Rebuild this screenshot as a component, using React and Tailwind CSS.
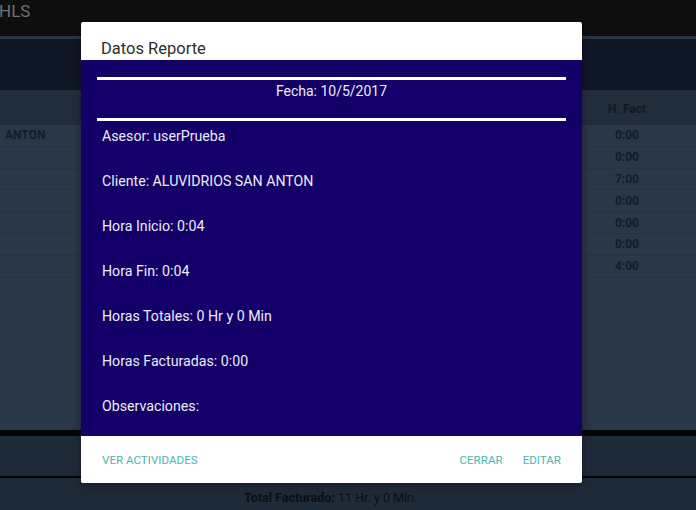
import React from "react";

const rows = ["0:00", "0:00", "7:00", "0:00", "0:00", "0:00", "4:00"];
const items = [
  "Asesor: userPrueba",
  "Cliente: ALUVIDRIOS SAN ANTON",
  "Hora Inicio: 0:04",
  "Hora Fin: 0:04",
  "Horas Totales: 0 Hr y 0 Min",
  "Horas Facturadas: 0:00",
  "Observaciones:",
];

export default function App() {
  return (
    <div
      className="relative w-[696px] h-[510px] overflow-hidden flex flex-col"
      style={{ fontFamily: "Roboto, 'Noto Sans', sans-serif" }}
    >
      {/* background app */}
      <div className="h-[36px] shrink-0 bg-[#0e0e0e] flex items-start pt-[0px]">
        <span className="text-[17px] leading-[22px] text-[#6f7378] ml-[-1px]">HLS</span>
      </div>
      <div className="h-[3px] shrink-0 bg-[#2b3644]" />
      <div className="h-[51px] shrink-0 bg-[#0f1625]" />
      <div className="h-[35px] shrink-0 bg-[#222d3c] flex items-center justify-end pr-[24px]">
        <span className="w-[90px] text-center text-[12px] font-bold text-[#101824] pt-[2px]">H. Fact</span>
      </div>
      <div className="flex-1 bg-[#2a3748] flex flex-col">
        {rows.map((v, i) => (
          <div key={i} className="h-[21.8px] shrink-0 flex items-center justify-between pr-[24px] border-b border-[#263243]">
            <span className="pl-[5px] text-[12px] font-bold text-[#141c28]">{i === 0 ? "ANTON" : ""}</span>
            <span className="w-[90px] text-center text-[12px] font-bold text-[#141c28]">{v}</span>
          </div>
        ))}
      </div>
      <div className="h-[6px] shrink-0 bg-[#050505]" />
      <div className="h-[40px] shrink-0 bg-[#1f2a39]" />
      <div className="h-[2px] shrink-0 bg-[#050505]" />
      <div className="h-[32px] shrink-0 bg-[#1f2a39] flex pl-[244px] pt-[13px]">
        <span className="text-[12.5px] leading-[14px] text-[#0a0e15]">
          <b>Total Facturado:</b> 11 Hr. y 0 Min.
        </span>
      </div>

      {/* dialog */}
      <div className="absolute left-[81px] top-[22px] w-[501px] flex flex-col bg-white rounded-[2px] shadow-[0_2px_8px_rgba(0,0,0,0.4)]">
        <div className="h-[38px] shrink-0 overflow-hidden pl-[20px] pt-[15px]">
          <span className="text-[16.5px] leading-[24px] text-[#2e2e2e] block">Datos Reporte</span>
        </div>
        <div className="h-[376px] shrink-0 bg-[#130068] px-[16px] pt-[17px] flex flex-col">
          <div className="h-[3px] shrink-0 bg-white" />
          <div className="h-[20px] shrink-0 mt-[1px] text-center text-[14px] leading-[20px] text-[#ecebf7]">Fecha: 10/5/2017</div>
          <div className="h-[3px] shrink-0 bg-white mt-[17px]" />
          <div className="flex flex-col gap-[25px] pl-[5px] mt-[5px]">
            {items.map((t) => (
              <div key={t} className="h-[20px] shrink-0 text-[14.2px] leading-[20px] text-[#ecebf7]">{t}</div>
            ))}
          </div>
        </div>
        <div className="h-[47px] shrink-0 flex items-center px-[21px] pt-[3px] text-[11.6px] text-[#4db6ac]">
          <span>VER ACTIVIDADES</span>
          <span className="ml-auto">CERRAR</span>
          <span className="ml-[20px]">EDITAR</span>
        </div>
      </div>
    </div>
  );
}
